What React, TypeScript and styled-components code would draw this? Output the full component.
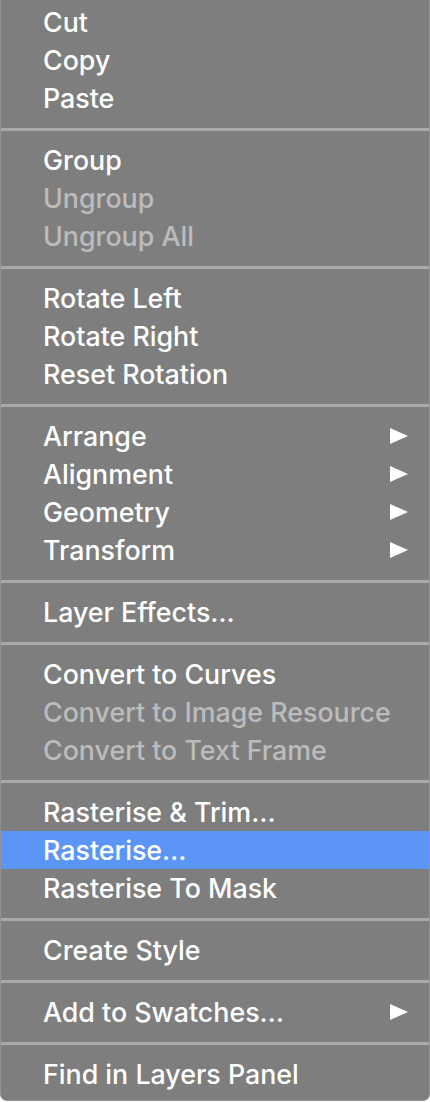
import React from 'react'
import styled, { createGlobalStyle } from 'styled-components'

const GlobalStyle = createGlobalStyle`
    html, body {
        margin: 0;
        padding: 0;
        background: #ffffff;
    }
`;

const Menu = styled.div`
    width: 430px;
    box-sizing: border-box;
    padding: 3px 0 7px 0;
    background: #7e7e7e;
    border-left: 1px solid #939393;
    border-right: 1px solid #939393;
    border-bottom: 1px solid #939393;
    border-radius: 0 0 7px 7px;
    font-family: Inter, "Liberation Sans", sans-serif;
    font-size: 26.8px;
    font-weight: 500;
    display: flex;
    flex-direction: column;
`;

const Item = styled.div<{ $disabled?: boolean; $active?: boolean }>`
    height: 38px;
    display: flex;
    align-items: center;
    justify-content: space-between;
    padding: 0 21px 0 42px;
    color: ${p => (p.$disabled ? '#bcbcbc' : '#ffffff')};
    background: ${p => (p.$active ? '#5b96f7' : 'transparent')};
    white-space: nowrap;
`;

const Separator = styled.div`
    height: 3px;
    margin: 11px 0 10px 0;
    background: #a9a9a9;
`;

const Arrow = styled.svg`
    width: 18px;
    height: 16px;
    fill: #ffffff;
`;

type Entry = { label: string; disabled?: boolean; active?: boolean; sub?: boolean };

const groups: Entry[][] = [
    [{ label: 'Cut' }, { label: 'Copy' }, { label: 'Paste' }],
    [{ label: 'Group' }, { label: 'Ungroup', disabled: true }, { label: 'Ungroup All', disabled: true }],
    [{ label: 'Rotate Left' }, { label: 'Rotate Right' }, { label: 'Reset Rotation' }],
    [
        { label: 'Arrange', sub: true },
        { label: 'Alignment', sub: true },
        { label: 'Geometry', sub: true },
        { label: 'Transform', sub: true },
    ],
    [{ label: 'Layer Effects…' }],
    [
        { label: 'Convert to Curves' },
        { label: 'Convert to Image Resource', disabled: true },
        { label: 'Convert to Text Frame', disabled: true },
    ],
    [{ label: 'Rasterise & Trim…' }, { label: 'Rasterise…', active: true }, { label: 'Rasterise To Mask' }],
    [{ label: 'Create Style' }],
    [{ label: 'Add to Swatches…', sub: true }],
    [{ label: 'Find in Layers Panel' }],
];

export default function App() {
    return (
        <>
            <GlobalStyle />
            <Menu>
                {groups.map((group, gi) => (
                    <React.Fragment key={gi}>
                        {gi > 0 && <Separator />}
                        {group.map(item => (
                            <Item key={item.label} $disabled={item.disabled} $active={item.active}>
                                <span>{item.label}</span>
                                {item.sub && (
                                    <Arrow viewBox="0 0 18 16">
                                        <polygon points="0,0 18,8 0,16" />
                                    </Arrow>
                                )}
                            </Item>
                        ))}
                    </React.Fragment>
                ))}
            </Menu>
        </>
    );
}
